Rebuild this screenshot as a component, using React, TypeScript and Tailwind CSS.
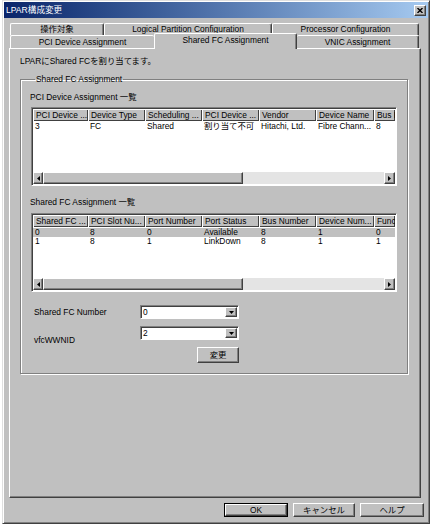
import React from 'react'

const font = { fontFamily: '"Liberation Sans", "Noto Sans CJK JP", sans-serif' }

const raised = 'bg-[#c0c0c0] border border-t-white border-l-white border-r-[#404040] border-b-[#404040] shadow-[inset_-1px_-1px_#808080]'
const sunken = 'border border-t-[#808080] border-l-[#808080] border-r-white border-b-white shadow-[inset_1px_1px_#404040]'

function TriLeft() {
  return (
    <svg width="3" height="5" viewBox="0 0 3 5">
      <path d="M3 0 L0 2.5 L3 5 Z" fill="#000" />
    </svg>
  )
}

function TriRight() {
  return (
    <svg width="3" height="5" viewBox="0 0 3 5">
      <path d="M0 0 L3 2.5 L0 5 Z" fill="#000" />
    </svg>
  )
}

function TriDown() {
  return (
    <svg width="5" height="3" viewBox="0 0 5 3">
      <path d="M0 0 L5 0 L2.5 3 Z" fill="#000" />
    </svg>
  )
}

interface ListProps {
  columns: Array<{ label: string; width: number }>
  rows: string[][]
  selected?: number
}

function ListView({ columns, rows, selected }: ListProps) {
  return (
    <div className={`${sunken} h-[79px] w-[366px] bg-white flex flex-col p-px`}>
      <div className="flex h-[12px] overflow-hidden shrink-0">
        {columns.map((c, i) => (
          <div
            key={i}
            style={{ width: c.width }}
            className="shrink-0 bg-[#c0c0c0] shadow-[inset_1px_1px_white,inset_-1px_-1px_#404040] pl-[3px] leading-[12px] whitespace-nowrap overflow-hidden"
          >
            {c.label}
          </div>
        ))}
      </div>
      <div className="flex-1 flex flex-col pt-px">
        {rows.map((r, i) => (
          <div key={i} className={`flex h-[9px] leading-[9px] ${selected === i ? 'bg-[#c0c0c0]' : ''}`}>
            {r.map((v, j) => (
              <div
                key={j}
                style={{ width: columns[j].width }}
                className="shrink-0 pl-[2px] whitespace-nowrap overflow-hidden"
              >
                {v}
              </div>
            ))}
          </div>
        ))}
      </div>
      <div className="flex h-[12px] shrink-0 bg-[#e4e4e4]">
        <div className={`${raised} w-[10px] flex items-center justify-center`}>
          <TriLeft />
        </div>
        <div className={`${raised} w-[200px]`} />
        <div className="flex-1" />
        <div className={`${raised} w-[11px] flex items-center justify-center`}>
          <TriRight />
        </div>
      </div>
    </div>
  )
}

function Combo({ value }: { value: string }) {
  return (
    <div className={`${sunken} w-[99px] h-[14px] bg-white flex items-stretch p-px`}>
      <div className="flex-1 pl-[1px] leading-[11px]">{value}</div>
      <div className={`${raised} w-[12px] flex items-center justify-center`}>
        <TriDown />
      </div>
    </div>
  )
}

const pciColumns = [
  { label: 'PCI Device ...', width: 55 },
  { label: 'Device Type', width: 57 },
  { label: 'Scheduling ...', width: 57 },
  { label: 'PCI Device ...', width: 57 },
  { label: 'Vendor', width: 57 },
  { label: 'Device Name', width: 58 },
  { label: 'Bus I', width: 21 },
]

const pciRows = [['3', 'FC', 'Shared', '割り当て不可', 'Hitachi, Ltd.', 'Fibre Chann...', '8']]

const fcColumns = [
  { label: 'Shared FC ...', width: 55 },
  { label: 'PCI Slot Nu...', width: 57 },
  { label: 'Port Number', width: 57 },
  { label: 'Port Status', width: 57 },
  { label: 'Bus Number', width: 57 },
  { label: 'Device Num...', width: 58 },
  { label: 'Func', width: 21 },
]

const fcRows = [
  ['0', '8', '0', 'Available', '8', '1', '0'],
  ['1', '8', '1', 'LinkDown', '8', '1', '1'],
]

export default function App() {
  return (
    <div style={font} className="w-[433px] h-[528px] bg-white text-[8.4px] text-black">
      <div className="ml-[2px] w-[428px] h-[524px] bg-[#c0c0c0] border border-t-[#dfdfdf] border-l-[#dfdfdf] border-r-[#404040] border-b-[#404040] shadow-[inset_1px_1px_white,inset_-1px_-1px_#808080] p-px flex flex-col">
        {/* title bar */}
        <div className="h-[16px] shrink-0 bg-gradient-to-r from-[#0a246a] to-[#a6caf0] flex items-center pl-[2px] pr-[2px]">
          <span className="text-white text-[8.6px] leading-[16px]">LPAR構成変更</span>
          <div className="flex-1" />
          <div className={`${raised} w-[12px] h-[11px] flex items-center justify-center`}>
            <svg width="6" height="5" viewBox="0 0 6 5">
              <path d="M0.5 0 L5.5 5 M5.5 0 L0.5 5" stroke="#000" strokeWidth="1.4" />
            </svg>
          </div>
        </div>

        {/* tabs */}
        <div className="mt-[5px] ml-[6px] w-[409px] flex flex-col">
          <div className="flex h-[12px]">
            {[
              ['操作対象', 94],
              ['Logical Partition Configuration', 168],
              ['Processor Configuration', 147],
            ].map(([t, w]) => (
              <div
                key={t as string}
                style={{ width: w as number }}
                className="shrink-0 border-t border-l border-r border-t-white border-l-white border-r-[#404040] rounded-t-[2px] shadow-[inset_-1px_0_#808080] text-center leading-[11px]"
              >
                {t}
              </div>
            ))}
          </div>
          <div className="flex h-[13px]">
            <div className="w-[144px] shrink-0 border-t border-l border-t-white border-l-white rounded-t-[2px] text-center leading-[12px]">
              PCI Device Assignment
            </div>
            <div className="relative z-10 -mt-[2px] h-[16px] w-[143px] shrink-0 bg-[#c0c0c0] border-t border-l border-r border-t-white border-l-white border-r-[#404040] rounded-t-[2px] shadow-[inset_-1px_0_#808080] text-center leading-[12px]">
              Shared FC Assignment
            </div>
            <div className="w-[122px] shrink-0 border-t border-r border-t-white border-r-[#404040] rounded-t-[2px] shadow-[inset_-1px_0_#808080] text-center leading-[12px]">
              VNIC Assignment
            </div>
          </div>
        </div>

        {/* panel */}
        <div className="ml-[5px] w-[412px] h-[450px] shrink-0 border border-t-white border-l-white border-r-[#404040] border-b-[#404040] shadow-[inset_-1px_-1px_#808080] pl-[10px] pt-[7px]">
          <div className="leading-[10px]">LPARにShared FCを割り当てます。</div>
          <fieldset className="mt-[8px] w-[388px] border border-[#808080] shadow-[1px_1px_0_white,inset_1px_1px_0_white] px-[10px] pb-[10px]">
            <legend className="ml-[4px] px-[1px] leading-[10px]">Shared FC Assignment</legend>
            <div className="pt-[8px] -ml-px leading-[10px]">PCI Device Assignment 一覧</div>
            <div className="mt-[5px]">
              <ListView columns={pciColumns} rows={pciRows} />
            </div>
            <div className="mt-[11px] -ml-px leading-[10px]">Shared FC Assignment 一覧</div>
            <div className="mt-[6px]">
              <ListView columns={fcColumns} rows={fcRows} selected={0} />
            </div>

            <div className="w-[208px] mt-[13px] flex flex-col">
              <div className="flex items-center pl-[3px]">
                <div className="w-[106px] leading-[10px]">Shared FC Number</div>
                <Combo value="0" />
              </div>
              <div className="flex items-start pl-[3px] mt-[7px]">
                <div className="w-[106px] pt-[9px] leading-[10px]">vfcWWNID</div>
                <Combo value="2" />
              </div>
              <div className="flex justify-end mt-[2px]">
                <div className={`${raised} w-[42px] h-[16px] flex items-center justify-center`}>変更</div>
              </div>
            </div>
          </fieldset>
        </div>

        {/* dialog buttons */}
        <div className="mt-[5px] flex justify-end gap-[5px] pr-[4px]">
          <div className="w-[64px] h-[14px] border border-black">
            <div className={`${raised} h-full flex items-center justify-center`}>OK</div>
          </div>
          <div className={`${raised} w-[62px] h-[14px] flex items-center justify-center`}>キャンセル</div>
          <div className={`${raised} w-[64px] h-[14px] flex items-center justify-center`}>ヘルプ</div>
        </div>
      </div>
    </div>
  )
}
